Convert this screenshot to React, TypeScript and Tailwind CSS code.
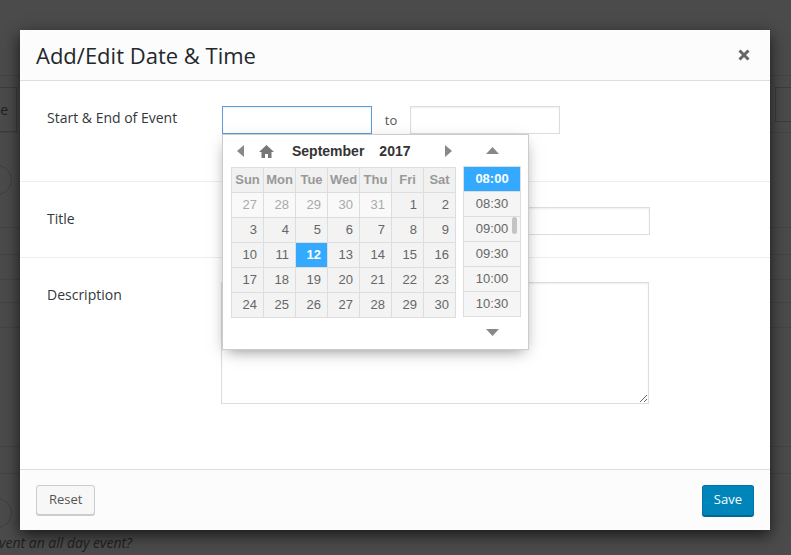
import React from "react";

const ui = "font-['Open_Sans','Noto_Sans',sans-serif]";
const pick = "font-['Liberation_Sans',Arial,sans-serif]";

const weeks: { d: number; muted?: boolean; active?: boolean }[][] = [
  [27, 28, 29, 30, 31].map((d) => ({ d, muted: true })).concat([{ d: 1 }, { d: 2 }]),
  [3, 4, 5, 6, 7, 8, 9].map((d) => ({ d })),
  [10, 11, 12, 13, 14, 15, 16].map((d) => ({ d, active: d === 12 })),
  [17, 18, 19, 20, 21, 22, 23].map((d) => ({ d })),
  [24, 25, 26, 27, 28, 29, 30].map((d) => ({ d })),
];

const times = ["08:00", "08:30", "09:00", "09:30", "10:00", "10:30"];

function DatePicker() {
  return (
    <div
      className={`absolute left-0 top-[28px] z-10 w-[307px] h-[216px] bg-white border border-[#ccc] shadow-[0_5px_15px_-5px_rgba(0,0,0,0.5)] flex pl-[8px] pr-[7px] ${pick}`}
    >
      <div className="w-[225px] flex flex-col">
        <div className="h-[32px] flex items-center">
          <svg width="7" height="12" viewBox="0 0 7 12" className="ml-[6px]">
            <path d="M7 0 L0 6 L7 12 Z" fill="#888" />
          </svg>
          <svg width="15" height="13" viewBox="0 0 15 13" className="ml-[15px]">
            <path d="M7.5 0 L15 7 L12.5 7 L12.5 13 L9 13 L9 9 L6 9 L6 13 L2.5 13 L2.5 7 L0 7 Z" fill="#777" />
          </svg>
          <span className="ml-[18px] text-[14px] font-bold text-[#333]">September</span>
          <span className="ml-[15px] text-[14px] font-bold text-[#333]">2017</span>
          <svg width="7" height="12" viewBox="0 0 7 12" className="ml-[34px]">
            <path d="M0 0 L7 6 L0 12 Z" fill="#888" />
          </svg>
        </div>
        <table className="border-collapse text-[13px]">
          <thead>
            <tr>
              {["Sun", "Mon", "Tue", "Wed", "Thu", "Fri", "Sat"].map((w) => (
                <th
                  key={w}
                  className="w-[32px] h-[25px] p-0 border border-[#ddd] bg-[#f1f1f1] text-[#999] font-bold text-center"
                >
                  {w}
                </th>
              ))}
            </tr>
          </thead>
          <tbody>
            {weeks.map((row, i) => (
              <tr key={i}>
                {row.map((c, j) => (
                  <td
                    key={j}
                    className={`w-[32px] h-[25px] p-0 pr-[6px] border border-[#ddd] text-right ${
                      c.active
                        ? "bg-[#33aaff] text-white font-bold"
                        : c.muted
                        ? "bg-[#f9f9f9] text-[#aaa]"
                        : "bg-[#f3f3f3] text-[#666]"
                    }`}
                  >
                    {c.d}
                  </td>
                ))}
              </tr>
            ))}
          </tbody>
        </table>
      </div>
      <div className="ml-[7px] w-[58px] flex flex-col">
        <div className="h-[31px] flex items-center justify-center">
          <svg width="13" height="7" viewBox="0 0 13 7">
            <path d="M0 7 L6.5 0 L13 7 Z" fill="#888" />
          </svg>
        </div>
        <div className="relative border border-[#ddd] text-[13px]">
          {times.map((t, i) => (
            <div
              key={t}
              className={`flex items-center justify-center ${i > 0 ? "h-[25px] border-t border-[#ddd]" : "h-[24px]"} ${
                i === 0 ? "bg-[#33aaff] text-white font-bold" : "bg-[#f5f5f5] text-[#666]"
              }`}
            >
              {t}
            </div>
          ))}
          <div className="absolute right-[3px] top-[50px] w-[5px] h-[17px] rounded-[3px] bg-[#c4c4c4]" />
        </div>
        <div className="h-[30px] flex items-center justify-center">
          <svg width="13" height="7" viewBox="0 0 13 7">
            <path d="M0 0 L13 0 L6.5 7 Z" fill="#888" />
          </svg>
        </div>
      </div>
    </div>
  );
}

const field = "block bg-white border shadow-[inset_0_1px_2px_rgba(0,0,0,0.07)] outline-none";

function Modal() {
  return (
    <div className={`absolute left-[20px] top-[30px] w-[750px] h-[500px] bg-white flex flex-col shadow-[0_5px_15px_rgba(0,0,0,0.7)] ${ui}`}>
      <div className="h-[51px] shrink-0 bg-[#fcfcfc] border-b border-[#ddd] flex items-center justify-between pl-[16px] pr-[20px]">
        <h1 className="text-[22px] leading-none text-[#23282d] font-normal">Add/Edit Date &amp; Time</h1>
        <svg width="12" height="12" viewBox="0 0 12 12">
          <path d="M1.5 1.5 L10.5 10.5 M10.5 1.5 L1.5 10.5" stroke="#666" strokeWidth="3" />
        </svg>
      </div>

      <div className="h-[101px] shrink-0 border-b border-[#eee] flex pl-[27px] pt-[25px]">
        <label className="w-[175px] pt-[1px] text-[14px] text-[#32373c]">Start &amp; End of Event</label>
        <div className="flex items-start">
          <div className="relative">
            <input className={`${field} w-[150px] h-[28px] border-[#5b9dd9] shadow-[0_0_2px_rgba(30,140,190,0.8)]`} />
            <DatePicker />
          </div>
          <span className="w-[38px] h-[28px] flex items-center justify-center pt-[2px] text-[13px] text-[#555]">to</span>
          <input className={`${field} border-[#ddd] w-[150px] h-[28px]`} />
        </div>
      </div>

      <div className="h-[76px] shrink-0 border-b border-[#eee] flex pl-[27px] pt-[25px]">
        <label className="w-[175px] pt-[1px] text-[14px] text-[#32373c]">Title</label>
        <input className={`${field} border-[#ddd] w-[428px] h-[28px]`} />
      </div>

      <div className="flex-1 flex pl-[27px] pt-[24px]">
        <label className="w-[174px] pt-[2px] text-[14px] text-[#32373c]">Description</label>
        <textarea className={`${field} border-[#ddd] w-[428px] h-[122px] resize`} />
      </div>

      <div className="h-[61px] shrink-0 bg-[#fcfcfc] border-t border-[#ddd] flex items-center justify-between px-[16px]">
        <button className="h-[30px] px-[12px] bg-[#f7f7f7] border border-[#ccc] rounded-[3px] shadow-[0_1px_0_#ccc] text-[13px] text-[#555]">
          Reset
        </button>
        <button className="h-[31px] px-[11px] bg-[#0085ba] border border-[#0073aa] border-b-[#006799] rounded-[3px] shadow-[0_1px_0_#006799] text-[13px] text-white">
          Save
        </button>
      </div>
    </div>
  );
}

export default function App() {
  return (
    <div className={`relative w-[791px] h-[555px] overflow-hidden bg-[#4b4b4b] ${ui}`}>
      {/* page behind the overlay */}
      <div className="flex flex-col">
        <div className="h-[76px] border-b border-[#444]" />
        <div className="h-[57px] flex justify-between pt-[11px] border-b border-[#444]">
          <div className="w-[17px] h-[45px] border border-l-0 border-[#3d3d3d] flex items-center justify-end pr-[8px] overflow-hidden text-[14px] text-[#1f1f1f]">
            e
          </div>
          <div className="w-[16px] h-[35px] border border-r-0 border-[#3d3d3d]" />
        </div>
        <div className="h-[95px] flex items-center border-b border-[#444]">
          <div className="ml-[-18px] w-[30px] h-[30px] rounded-full border border-[#3f3f3f]" />
        </div>
        <div className="h-[27px] border-b border-[#444]" />
        <div className="h-[25px] border-b border-[#444]" />
        <div className="h-[23px] border-b border-[#444]" />
        <div className="h-[25px] border-b border-[#444]" />
        <div className="h-[119px] border-b border-[#444]" />
        <div className="h-[27px] border-b border-[#444]" />
        <div className="h-[56px] flex items-end pb-[2px]">
          <div className="ml-[-18px] w-[30px] h-[30px] rounded-full border border-[#3f3f3f]" />
        </div>
        <div className="ml-[-8px] pt-[3px] text-[14px] leading-[20px] italic text-[#1f1f1f]">event an all day event?</div>
      </div>
      <Modal />
    </div>
  );
}
